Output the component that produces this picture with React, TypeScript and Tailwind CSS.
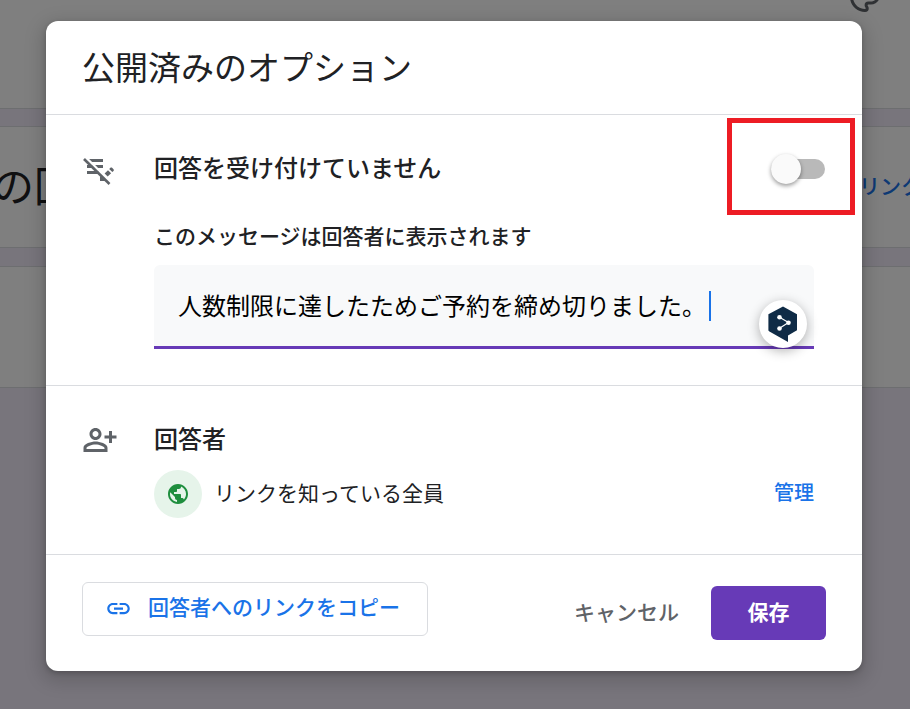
import { MdLink, MdOutlinePalette, MdPublic } from 'react-icons/md'

function ResponsesOffIcon() {
  return (
    <svg viewBox="0 0 36 36" className="h-9 w-9 text-[#5f6368]" fill="currentColor" aria-hidden="true">
      <path d="M7 6h14v3H7zM5 12h16v3H5zM5 18h12v3H5z" />
      <path d="M18 28v-4l2-2 5 6z" />
      <path d="M22.6 20.4l3.4-3.2 3.1 3.1-3.4 3.3z" />
      <path d="M27.2 16l1.2-1.2c.5-.5 1.2-.5 1.7 0l1.4 1.4c.5.5.5 1.2 0 1.7l-1.2 1.2z" />
      <path d="M4 4.600l24 24" stroke="#fff" strokeWidth="2.400" />
      <path d="M2 6l25.500 25" stroke="currentColor" strokeWidth="2.600" />
    </svg>
  )
}

function PersonAddIcon() {
  return (
    <svg viewBox="0 0 24 24" className="h-9 w-9 text-[#5f6368]" fill="currentColor" aria-hidden="true">
      <path d="M9 12c2.210 0 4-1.790 4-4s-1.790-4-4-4-4 1.790-4 4 1.790 4 4 4zm0-6c1.100 0 2 .9 2 2s-.9 2-2 2-2-.9-2-2 .9-2 2-2z" />
      <path d="M1 20v-2.800C1 14.400 6.300 13 9 13s8 1.400 8 4.200V20zm2-2h12v-.7C14.600 16.300 11.700 15 9 15s-5.600 1.300-6 2.300z" />
      <path d="M20 14v-3h3V9h-3V6h-2v3h-3v2h3v3z" />
    </svg>
  )
}

function TranslatorBadge() {
  return (
    <button
      type="button"
      aria-label="DeepL"
      className="absolute right-[7px] bottom-px flex h-12 w-12 items-center justify-center rounded-full bg-white shadow-[0_3px_12px_rgba(0,0,0,0.3)]"
    >
      <svg viewBox="0 0 48 48" className="h-12 w-12" aria-hidden="true">
        <path
          d="M24 6.500L38 14.300v16L29 35.500V42L10 31.200c-.4-.3-.6-.7-.6-1.200V14.300z"
          fill="#0f2b46"
        />
        <path d="M20.500 17.300L29.500 22.500L20.500 28.300" fill="none" stroke="#fff" strokeWidth="1.200" />
        <circle cx="20.500" cy="17.300" r="2.300" fill="#fff" />
        <circle cx="29.500" cy="22.700" r="2.300" fill="#fff" />
        <circle cx="20.500" cy="28.500" r="2.300" fill="#fff" />
      </svg>
    </button>
  )
}

function FormsPage() {
  return (
    <div className="absolute inset-0 overflow-hidden bg-[#f0ebf8]" aria-hidden="true">
      <div className="flex h-[109px] justify-end border-b border-[#dadce0] bg-white pr-[27px]">
        <MdOutlinePalette className="-mt-[21px] h-9 w-9 text-[#5f6368]" />
      </div>
      <div className="mt-[17px] flex h-[122px] items-center justify-between border-y border-[#dadce0] bg-white pb-0.5">
        <span className="-ml-2 pb-1 text-[42px] leading-none text-[#202124]">の回</span>
        <span className="-mr-3 text-[21px] font-medium text-[#1a73e8]">リンク</span>
      </div>
      <div className="mt-[18px] h-[122px] border-y border-[#dadce0] bg-white" />
      <div className="absolute inset-0 bg-black/50" />
    </div>
  )
}

export default function App() {
  return (
    <div
      lang="ja"
      className="relative min-h-screen pt-[21px] pr-12 pb-[38px] pl-[46px] font-['Noto_Sans_CJK_JP',sans-serif] text-[#202124]"
    >
      <FormsPage />

      <div
        role="dialog"
        aria-labelledby="dialog-title"
        className="relative rounded-xl bg-white shadow-[0_2px_5px_rgba(0,0,0,0.2),0_6px_18px_5px_rgba(0,0,0,0.15)]"
      >
        <header className="flex h-[93px] items-center px-9 pb-1">
          <h1 id="dialog-title" className="text-[33px] leading-10">
            公開済みのオプション
          </h1>
        </header>

        <section className="flex border-t border-[#dadce0] px-9 py-9">
          <div className="w-[72px] shrink-0 pt-0.5">
            <ResponsesOffIcon />
          </div>
          <div className="min-w-0 flex-1">
            <div className="flex h-8 items-start justify-between">
              <label htmlFor="accepting" className="text-2xl leading-8 font-medium">
                回答を受け付けていません
              </label>
              <div className="relative mr-px flex pt-2">
                <input
                  id="accepting"
                  type="checkbox"
                  role="switch"
                  className="relative h-5 w-[54px] appearance-none rounded-full bg-[#b9b9b9] before:absolute before:-top-[5px] before:left-0 before:h-[30px] before:w-[30px] before:rounded-full before:bg-[#fafafa] before:shadow-[0_2px_4px_rgba(0,0,0,0.4)]"
                />
                <div className="pointer-events-none absolute -top-[33px] -right-[30px] h-[97px] w-32 border-5 border-[#ed1c24]" />
              </div>
            </div>
            <div className="mt-9 pr-3">
              <label htmlFor="message" className="block text-[21px] leading-8 font-medium">
                このメッセージは回答者に表示されます
              </label>
              <div className="relative mt-[14px]">
                <input
                  id="message"
                  type="text"
                  defaultValue="人数制限に達したためご予約を締め切りました。"
                  className="block h-[84px] w-full rounded-t-md border-b-3 border-[#673ab7] bg-[#f8f9fa] px-6 pb-0.5 text-2xl text-black outline-none"
                />
                <span className="absolute top-[26px] left-[555px] h-[30px] w-0.5 bg-[#1a73e8]" />
                <TranslatorBadge />
              </div>
            </div>
          </div>
        </section>

        <section className="flex border-t border-[#dadce0] px-9 py-9">
          <div className="w-[72px] shrink-0">
            <PersonAddIcon />
          </div>
          <div className="min-w-0 flex-1">
            <h2 className="text-2xl leading-8 font-medium">回答者</h2>
            <div className="mt-4 flex items-center gap-3 pr-3">
              <span className="flex h-12 w-12 items-center justify-center rounded-full bg-[#e6f4ea]">
                <MdPublic className="h-6 w-6 text-[#1e8e3e]" />
              </span>
              <span className="pb-1 text-[21px] leading-8">リンクを知っている全員</span>
              <button type="button" className="ml-auto pb-1 text-xl leading-8 font-medium text-[#1a73e8]">
                管理
              </button>
            </div>
          </div>
        </section>

        <footer className="flex items-start justify-between border-t border-[#dadce0] px-9 pt-[27px] pb-[31px]">
          <button
            type="button"
            className="flex h-[54px] w-[346px] items-center gap-4 rounded-md border border-[#dadce0] pb-0.5 pl-[22px] text-[21px] leading-8 font-medium text-[#1a73e8]"
          >
            <MdLink className="h-[27px] w-[27px]" />
            <span className="pb-1">回答者へのリンクをコピー</span>
          </button>
          <div className="flex items-center gap-4 pt-1 text-[21px] leading-8">
            <button type="button" className="h-[54px] px-4 pb-1 font-medium text-[#5f6368]">
              キャンセル
            </button>
            <button type="button" className="h-[54px] w-[115px] rounded-md bg-[#673ab7] pb-1 font-bold text-white">
              保存
            </button>
          </div>
        </footer>
      </div>
    </div>
  )
}
